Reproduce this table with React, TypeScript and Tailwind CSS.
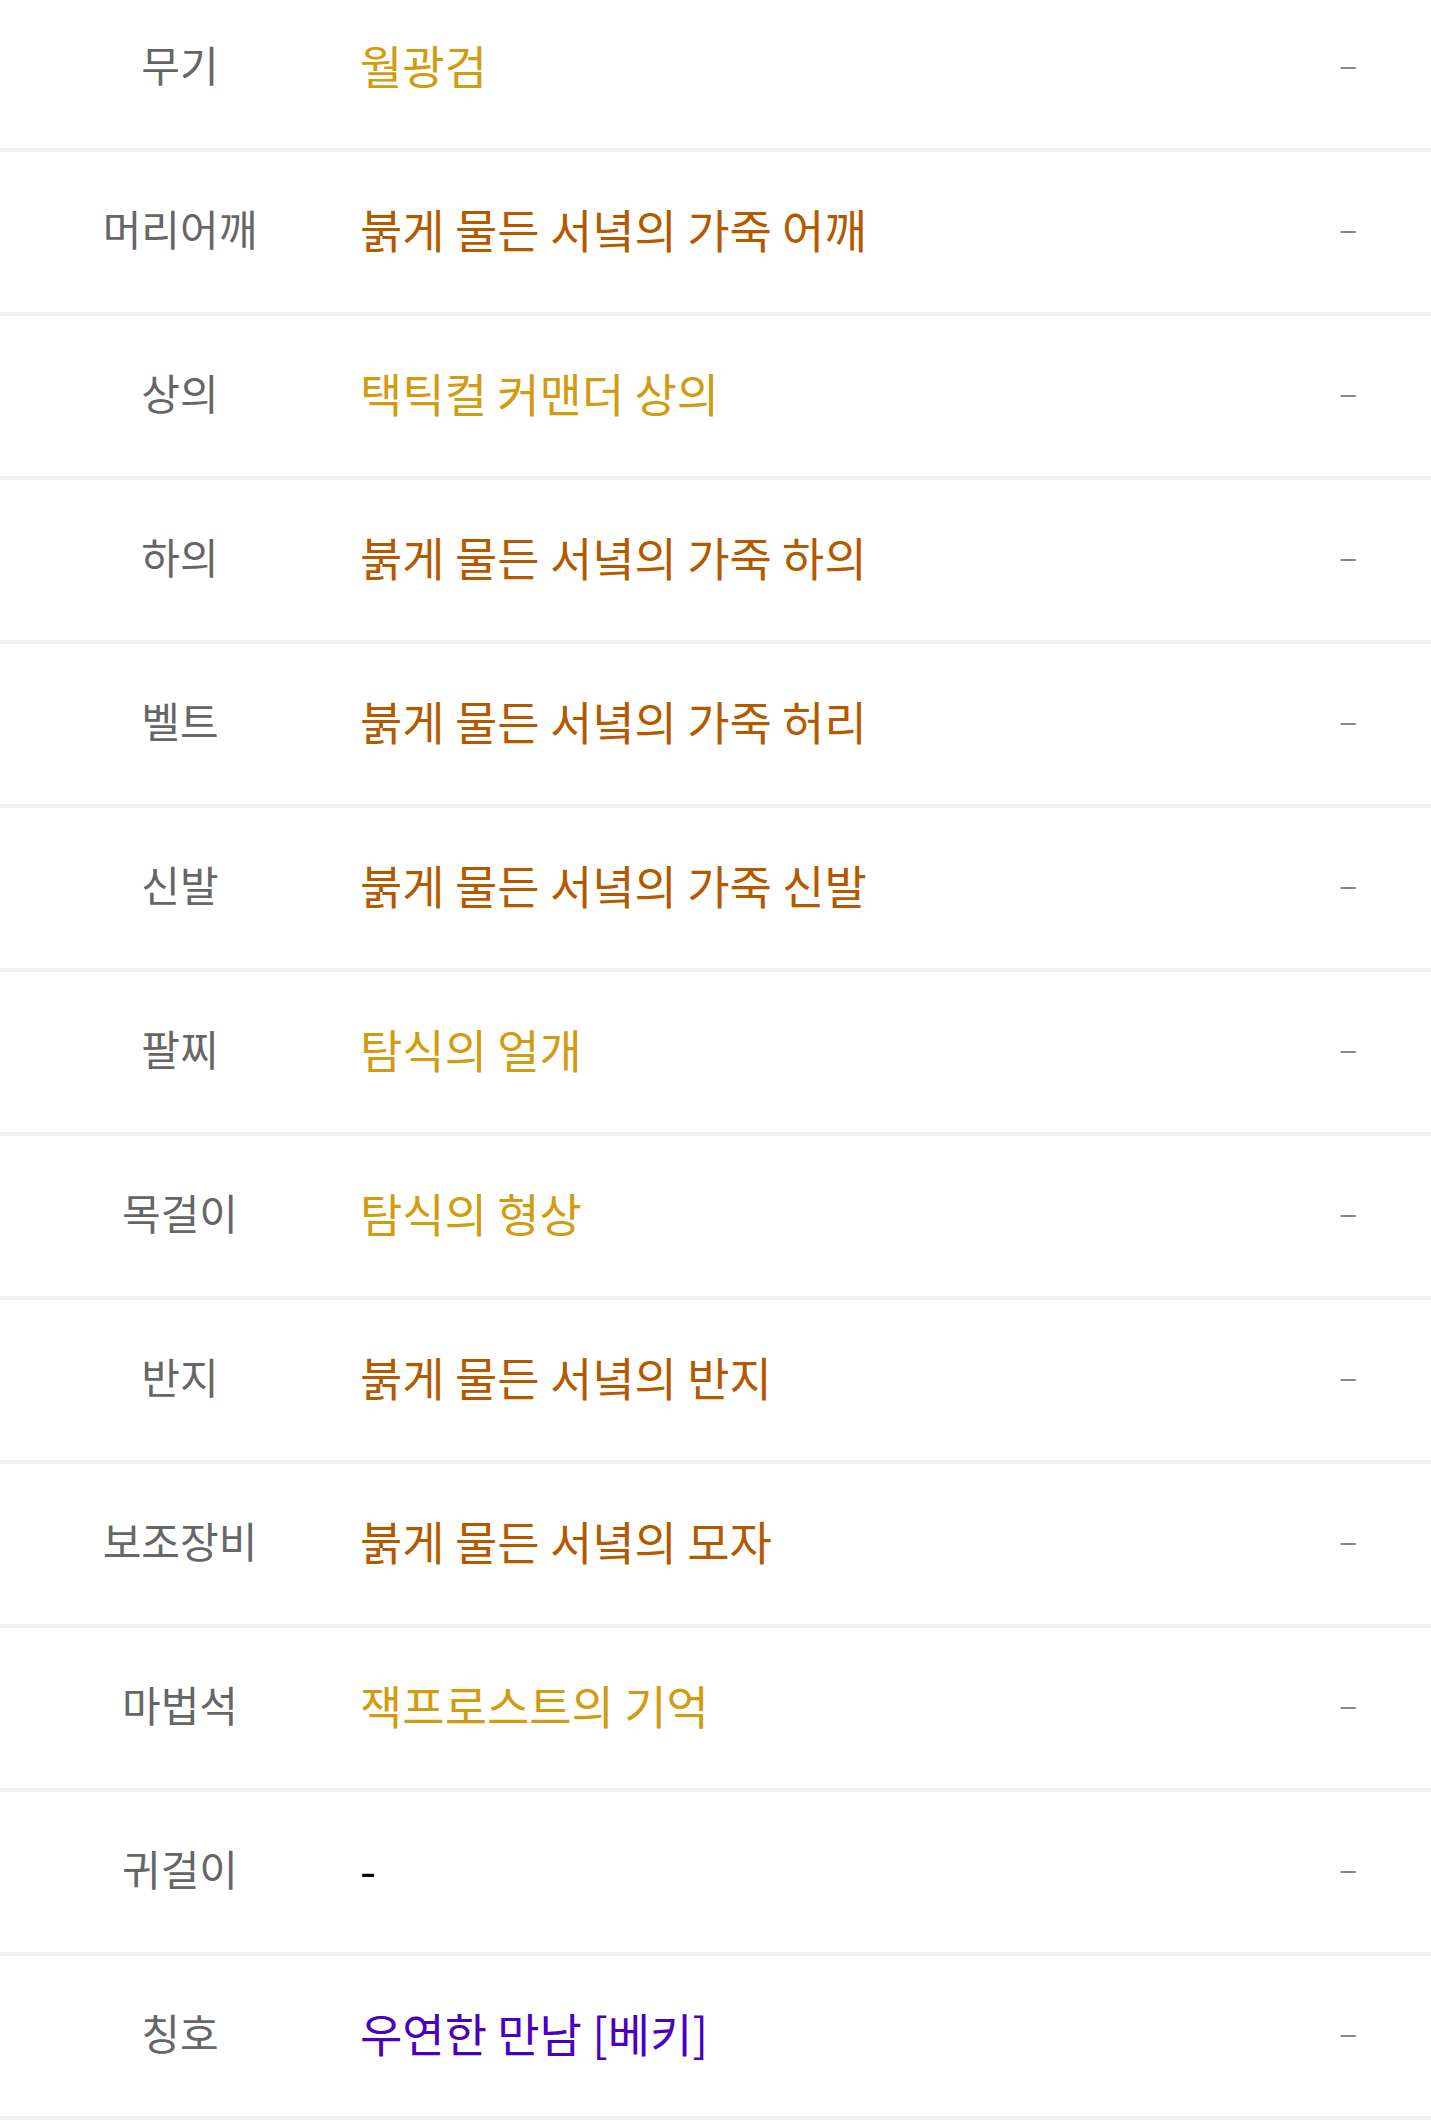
const rows: { label: string; item: string; color: string }[] = [
  { label: "무기", item: "월광검", color: "text-[#d19c12]" },
  { label: "머리어깨", item: "붉게 물든 서녘의 가죽 어깨", color: "text-[#b35a00]" },
  { label: "상의", item: "택틱컬 커맨더 상의", color: "text-[#d19c12]" },
  { label: "하의", item: "붉게 물든 서녘의 가죽 하의", color: "text-[#b35a00]" },
  { label: "벨트", item: "붉게 물든 서녘의 가죽 허리", color: "text-[#b35a00]" },
  { label: "신발", item: "붉게 물든 서녘의 가죽 신발", color: "text-[#b35a00]" },
  { label: "팔찌", item: "탐식의 얼개", color: "text-[#d19c12]" },
  { label: "목걸이", item: "탐식의 형상", color: "text-[#d19c12]" },
  { label: "반지", item: "붉게 물든 서녘의 반지", color: "text-[#b35a00]" },
  { label: "보조장비", item: "붉게 물든 서녘의 모자", color: "text-[#b35a00]" },
  { label: "마법석", item: "잭프로스트의 기억", color: "text-[#d19c12]" },
  { label: "귀걸이", item: "-", color: "text-black" },
  { label: "칭호", item: "우연한 만남 [베키]", color: "text-[#4a00c0]" },
];

export default function App() {
  return (
    <div className="min-h-screen bg-white font-['Noto_Sans_CJK_KR',sans-serif] overflow-hidden">
      <div className="-mt-[12px]">
        {rows.map((r) => (
          <div
            key={r.label}
            className="grid grid-cols-[360px_1fr_166px] items-center h-[164px] pb-2 border-b-4 border-[#f1f1f1]"
          >
            <div className="text-center text-[42px] leading-none text-[#666666]">{r.label}</div>
            <div className={`text-[46px] leading-none ${r.color}`}>{r.item}</div>
            <div className="text-center text-[34px] leading-none text-[#888888]">–</div>
          </div>
        ))}
      </div>
    </div>
  );
}
